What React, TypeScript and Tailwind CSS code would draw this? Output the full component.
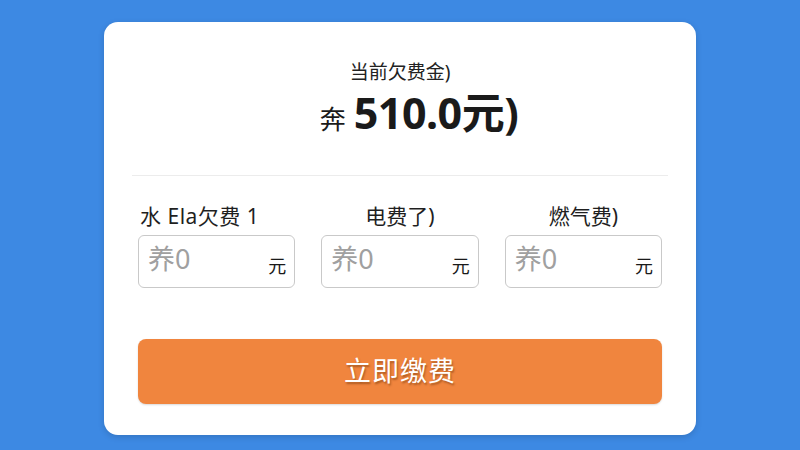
import { useState } from 'react'

const font = { fontFamily: '"Noto Sans", "Noto Sans CJK SC", sans-serif' }

const fees = [
  { label: '水 Ela欠费 1', align: 'text-left pl-[2px] tracking-[0.5px]' },
  { label: '电费了)', align: 'text-center' },
  { label: '燃气费)', align: 'text-center' },
]

export default function App() {
  const [values, setValues] = useState(['', '', ''])

  return (
    <div className="w-[800px] h-[450px] bg-[#3d89e3] overflow-hidden" style={font}>
      <div className="mx-auto mt-[22px] w-[592px] h-[413px] bg-white rounded-[14px] shadow-[0_2px_6px_rgba(0,0,0,0.15)] px-[34px] pt-[38px] flex flex-col">
        {/* Summary */}
        <div className="text-center text-[19px] leading-[24px] text-[#222]">当前欠费金)</div>
        <div className="mt-[6px] pl-[38px] flex items-baseline justify-center text-[#1a1a1a] leading-[46px]">
          <span className="text-[26px] mr-[8px]">奔</span>
          <span className="text-[43px] font-bold tracking-[-0.5px]">510.0元)</span>
        </div>

        <div className="mt-[33px] h-px bg-[#ececec] mx-[-6px]" />

        {/* Fee inputs */}
        <div className="mt-[27px] grid grid-cols-3 gap-[26px]">
          {fees.map((fee, i) => (
            <div key={fee.label} className="flex flex-col">
              <div className={`text-[21px] leading-[26px] text-[#1f1f1f] whitespace-pre ${fee.align}`}>{fee.label}</div>
              <label className="mt-[6px] h-[53px] border border-[#c9c9c9] rounded-[6px] flex items-center px-[9px] relative">
                <input
                  value={values[i]}
                  onChange={(e) => setValues(values.map((v, j) => (j === i ? e.target.value : v)))}
                  placeholder="养0"
                  className="w-[110px] text-[27px] outline-none placeholder:text-[#a0a0a0] text-[#333] bg-transparent -mt-[4px]"
                  style={font}
                />
                <span className="absolute right-[8px] bottom-[10px] text-[18px] leading-[22px] text-[#1a1a1a]">元</span>
              </label>
            </div>
          ))}
        </div>

        {/* Pay button */}
        <button className="mt-[51px] h-[65px] w-full rounded-[8px] bg-[#f0853e] text-white text-[27px] tracking-[1px] [text-shadow:1px_2px_2px_rgba(90,40,0,0.45)] shadow-[0_1px_2px_rgba(0,0,0,0.15)]">
          立即缴费
        </button>
      </div>
    </div>
  )
}
